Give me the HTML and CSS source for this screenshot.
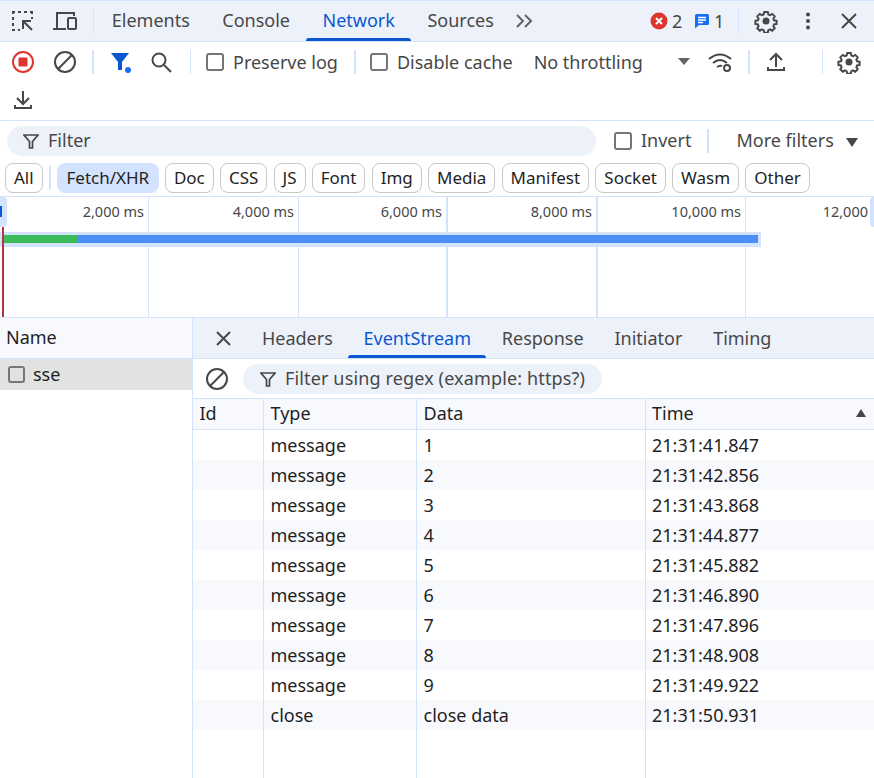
FILE: index.html
```html
<!DOCTYPE html>
<html lang="en">
  <head>
    <meta charset="UTF-8" />
    <title>DevTools Network</title>
    <link rel="stylesheet" href="styles.css">
  </head>
  <body>
    <!-- top tabs -->
    <div class="main-tabs">
      <svg class="icon first-icon" width="24" height="24" viewBox="0 0 24 24" fill="none" stroke="#474747" stroke-width="2"><path d="M2 5V3h2M7 3h3M13 3h3M19 3h2v2M21 8v2M2 8v3M2 14v3M2 20v1h2M7 21h2"/><path d="M21 21l-8-8M12 20v-8h8" stroke-width="2"/></svg>
      <svg class="icon" width="26" height="24" viewBox="0 0 26 24" fill="none" stroke="#474747" stroke-width="2"><path d="M5 20V4h17v3M1 20h13"/><rect x="16" y="9" width="8" height="11" rx="1"/></svg>
      <span class="sep"></span>
      <span class="main-tab">Elements</span>
      <span class="main-tab">Console</span>
      <span class="main-tab active">Network</span>
      <span class="main-tab">Sources</span>
      <svg class="more-tabs" width="20" height="16" viewBox="0 0 20 16" fill="none" stroke="#5f6368" stroke-width="2"><path d="M2 2l6 6-6 6M10 2l6 6-6 6"/></svg>
      <div class="main-right">
        <svg width="18" height="18" viewBox="0 0 18 18"><circle cx="9" cy="9" r="8.5" fill="#dc362e"/><path d="M6 6l6 6M12 6l-6 6" stroke="#fff" stroke-width="2"/></svg>
        <span class="count">2</span>
        <svg class="msg-icon" width="16" height="16" viewBox="0 0 16 16"><path d="M1 2.500Q1 1 2.500 1h11Q15 1 15 2.500v8.500Q15 12 13.500 12H5l-4 3.500z" fill="#1a6ef5"/><path d="M4 4.500h8M4 7h8M4 9.500h5" stroke="#fff" stroke-width="1.300"/></svg>
        <span class="count">1</span>
        <span class="sep sep-right"></span>
        <svg class="gear" width="24" height="24" viewBox="0 0 24 24"><use href="#gear-path"/></svg>
        <svg class="dots" width="24" height="24" viewBox="0 0 24 24" fill="#474747"><circle cx="12" cy="5.500" r="2"/><circle cx="12" cy="12" r="2"/><circle cx="12" cy="18.500" r="2"/></svg>
        <svg class="close" width="24" height="24" viewBox="0 0 24 24" fill="none" stroke="#474747" stroke-width="2"><path d="M5 5l14 14M19 5L5 19"/></svg>
      </div>
    </div>

    <!-- network toolbar -->
    <div class="toolbar">
      <div class="toolbar-row">
        <svg class="tool rec" width="24" height="24" viewBox="0 0 24 24"><circle cx="12" cy="12" r="10" fill="none" stroke="#dc362e" stroke-width="2"/><rect x="7.500" y="7.500" width="9" height="9" rx="1" fill="#dc362e"/></svg>
        <svg class="tool clear" width="24" height="24" viewBox="0 0 24 24" fill="none" stroke="#474747" stroke-width="2"><circle cx="12" cy="12" r="10"/><path d="M5 19L19 5"/></svg>
        <span class="sep"></span>
        <svg class="tool funnel" width="24" height="24" viewBox="0 0 24 24"><path d="M2 3h18l-7 9v8h-4v-8z" fill="#0b57d0"/><circle cx="19" cy="20" r="3" fill="#1a6ef5"/></svg>
        <svg class="tool search" width="24" height="24" viewBox="0 0 24 24" fill="none" stroke="#474747" stroke-width="2"><circle cx="10" cy="10" r="6.500"/><path d="M15 15l7 7"/></svg>
        <span class="sep sep-a"></span>
        <span class="check"></span><span class="tool-label">Preserve log</span>
        <span class="sep sep-b"></span>
        <span class="check"></span><span class="tool-label">Disable cache</span>
        <span class="tool-label throttle">No throttling</span>
        <span class="caret"></span>
        <svg class="tool wifi" width="26" height="24" viewBox="0 0 26 24" fill="none" stroke="#474747" stroke-width="2"><path d="M1 9q11-9 22 0M5 13q7-6 14 0M9 17q3-2 5-1"/><circle cx="19" cy="18" r="3"/></svg>
        <span class="sep sep-c"></span>
        <svg class="tool upload" width="24" height="24" viewBox="0 0 24 24" fill="none" stroke="#474747" stroke-width="2"><path d="M12 17V4M6 10l6-6 6 6M4 17v3h16v-3"/></svg>
        <span class="sep sep-d"></span>
        <svg class="gear" width="24" height="24" viewBox="0 0 24 24"><use href="#gear-path"/></svg>
      </div>
      <div class="toolbar-row second">
        <svg width="24" height="24" viewBox="0 0 24 24" fill="none" stroke="#474747" stroke-width="2"><path d="M12 3v13M6 10l6 6 6-6M4 17v3h16v-3"/></svg>
      </div>
    </div>

    <!-- filter bars -->
    <div class="filter-bar">
      <div class="filter-row">
        <div class="filter-pill">
          <svg width="16" height="16" viewBox="0 0 16 16" fill="none" stroke="#474747" stroke-width="1.700"><path d="M1 2h14l-5.500 6.500V15h-3V8.500z"/></svg>
          <span class="raised">Filter</span>
        </div>
        <span class="check"></span><span class="tool-label raised">Invert</span>
        <span class="sep sep-e"></span>
        <span class="tool-label more raised">More filters</span>
        <span class="caret dark"></span>
      </div>
      <div class="chips">
        <span class="chip">All</span>
        <span class="sep sep-chip"></span>
        <span class="chip on">Fetch/XHR</span>
        <span class="chip">Doc</span>
        <span class="chip">CSS</span>
        <span class="chip">JS</span>
        <span class="chip">Font</span>
        <span class="chip">Img</span>
        <span class="chip">Media</span>
        <span class="chip">Manifest</span>
        <span class="chip">Socket</span>
        <span class="chip">Wasm</span>
        <span class="chip">Other</span>
      </div>
    </div>

    <!-- overview -->
    <div class="overview">
      <div class="ov-cell w1">2,000 ms</div>
      <div class="ov-cell w2">4,000 ms</div>
      <div class="ov-cell w3">6,000 ms</div>
      <div class="ov-cell w4">8,000 ms</div>
      <div class="ov-cell w5">10,000 ms</div>
      <div class="ov-cell last">12,000</div>
      <span class="ov-grip left"></span>
      <span class="ov-grip right"></span>
      <div class="ov-track"><div class="ov-green"></div><div class="ov-blue"></div></div>
      <span class="ov-marker"></span>
    </div>

    <!-- requests + details -->
    <div class="split">
      <div class="names">
        <div class="names-head">Name</div>
        <div class="names-row"><span class="check small"></span><span class="raised">sse</span></div>
      </div>
      <div class="details">
        <div class="detail-tabs">
          <svg class="detail-close" width="20" height="20" viewBox="0 0 20 20" fill="none" stroke="#474747" stroke-width="2"><path d="M4 4l13 13M17 4L4 17"/></svg>
          <span class="detail-tab">Headers</span>
          <span class="detail-tab active">EventStream</span>
          <span class="detail-tab">Response</span>
          <span class="detail-tab">Initiator</span>
          <span class="detail-tab">Timing</span>
        </div>
        <div class="regex-row">
          <svg width="24" height="24" viewBox="0 0 24 24" fill="none" stroke="#474747" stroke-width="2"><circle cx="12" cy="12" r="10"/><path d="M5 19L19 5"/></svg>
          <div class="regex-pill">
            <svg width="16" height="16" viewBox="0 0 16 16" fill="none" stroke="#474747" stroke-width="1.700"><path d="M1 2h14l-5.500 6.500V15h-3V8.500z"/></svg>
            <span class="raised regex-text">Filter using regex (example: https?)</span>
          </div>
        </div>
        <div class="grid">
          <div class="grid-row head">
            <div>Id</div><div>Type</div><div>Data</div><div class="time-head">Time<span class="sort"></span></div>
          </div>
          <div class="grid-row"><div></div><div>message</div><div>1</div><div>21:31:41.847</div></div>
          <div class="grid-row"><div></div><div>message</div><div>2</div><div>21:31:42.856</div></div>
          <div class="grid-row"><div></div><div>message</div><div>3</div><div>21:31:43.868</div></div>
          <div class="grid-row"><div></div><div>message</div><div>4</div><div>21:31:44.877</div></div>
          <div class="grid-row"><div></div><div>message</div><div>5</div><div>21:31:45.882</div></div>
          <div class="grid-row"><div></div><div>message</div><div>6</div><div>21:31:46.890</div></div>
          <div class="grid-row"><div></div><div>message</div><div>7</div><div>21:31:47.896</div></div>
          <div class="grid-row"><div></div><div>message</div><div>8</div><div>21:31:48.908</div></div>
          <div class="grid-row"><div></div><div>message</div><div>9</div><div>21:31:49.922</div></div>
          <div class="grid-row"><div></div><div>close</div><div>close data</div><div>21:31:50.931</div></div>
          <div class="grid-row filler"><div></div><div></div><div></div><div></div></div>
        </div>
      </div>
    </div>

    <svg class="defs" width="0" height="0">
      <symbol id="gear-path" viewBox="0 0 24 24">
        <path d="M10 2h4l.6 2.800 1.900.8 2.400-1.500 2.800 2.800-1.500 2.400.8 1.900 2.800.6v3.400l-2.800.6-.8 1.900 1.500 2.400-2.800 2.800-2.400-1.500-1.900.8-.6 2.800h-4l-.6-2.800-1.900-.8-2.400 1.500-2.800-2.800 1.500-2.400-.8-1.900-2.800-.6v-3.400l2.800-.6.8-1.900-1.500-2.400 2.800-2.800 2.400 1.500 1.900-.8z" transform="translate(1.200 1.200) scale(.9)" fill="none" stroke="#474747" stroke-width="2.200"/>
        <circle cx="12" cy="12" r="3.500" fill="#474747"/>
      </symbol>
    </svg>
  </body>
</html>
```

FILE: styles.css
```css
* {
  box-sizing: border-box;
}

html,
body {
  margin: 0;
  padding: 0;
  height: 100%;
  overflow: hidden;
}

body {
  font-family: "Noto Sans", "Open Sans", sans-serif;
  font-size: 18px;
  color: #1f1f1f;
  background: #fff;
  display: flex;
  flex-direction: column;
}

svg {
  flex: none;
  display: block;
}

.defs {
  position: absolute;
}

.sep {
  flex: none;
  width: 2px;
  height: 24px;
  background: #d3e3fd;
}

.raised {
  padding-bottom: 2px;
}

/* top tabs */
.main-tabs {
  flex: none;
  height: 42px;
  display: flex;
  align-items: center;
  background: #edf2fa;
  border-top: 1px solid #d3e3fd;
  border-bottom: 1px solid #d3e3fd;
  color: #474747;
  padding-left: 11px;
}

.first-icon {
  margin-right: 17px;
}

.main-tabs .sep {
  width: 1px;
  height: 24px;
  margin-left: 15px;
}

.main-tab {
  height: 40px;
  line-height: 38px;
  padding: 0 16.25px;
  white-space: nowrap;
}

.main-tabs .sep + .main-tab {
  margin-left: 2px;
  padding-left: 15.75px;
}

.main-tab.active {
  color: #0b57d0;
  position: relative;
}

.main-tab.active::after {
  content: "";
  position: absolute;
  left: 0;
  right: 0;
  bottom: 0;
  height: 3px;
  background: #0b57d0;
  border-radius: 3px 3px 0 0;
}

.more-tabs {
  margin-left: 5px;
}

.main-right {
  margin-left: auto;
  display: flex;
  align-items: center;
  padding-right: 13px;
}

.count {
  margin-left: 4px;
  width: 12px;
}

.msg-icon {
  margin-left: 10px;
}

.main-tabs .sep-right {
  margin-left: 12px;
  margin-right: 15px;
}

.dots {
  margin-left: 18px;
}

.close {
  margin-left: 17px;
}

/* network toolbar */
.toolbar {
  flex: none;
  height: 79px;
  border-bottom: 1px solid #d3e3fd;
  color: #474747;
}

.toolbar-row {
  height: 39px;
  display: flex;
  align-items: center;
  padding-left: 11px;
}

.toolbar-row.second {
  height: 38px;
}

.clear {
  margin-left: 18px;
}

.toolbar-row .sep {
  margin-left: 15px;
}

.funnel {
  margin-left: 15px;
}

.search {
  margin-left: 16px;
}

.toolbar-row .sep-a {
  width: 1px;
  margin-left: 17px;
  margin-right: 15px;
}

.toolbar-row .sep-b {
  margin-left: 16px;
  margin-right: 14px;
}

.check {
  flex: none;
  width: 18px;
  height: 18px;
  border: 2px solid #747775;
  border-radius: 3px;
}

.tool-label {
  margin-left: 9px;
  white-space: nowrap;
}

.throttle {
  margin-left: 21px;
}

.caret {
  flex: none;
  width: 0;
  height: 0;
  margin-left: 35px;
  border-left: 6px solid transparent;
  border-right: 6px solid transparent;
  border-top: 7px solid #5f6368;
}

.wifi {
  margin-left: 18px;
}

.toolbar-row .sep-c {
  margin-left: 14px;
}

.upload {
  margin-left: 14px;
}

.toolbar-row .sep-d {
  width: 1px;
  margin-left: 34px;
}

.toolbar-row .gear {
  margin-left: 14px;
}

/* filter bars */
.filter-bar {
  flex: none;
  height: 76px;
  border-bottom: 1px solid #d3e3fd;
}

.filter-row {
  height: 40px;
  display: flex;
  align-items: center;
  padding-left: 7px;
  color: #474747;
  line-height: 24px;
}

.filter-pill {
  width: 589px;
  height: 30px;
  margin-right: 18px;
  padding-left: 16px;
  display: flex;
  align-items: center;
  gap: 9px;
  border-radius: 15px;
  background: #edf2fa;
}

.sep-e {
  margin-left: 16px;
}

.more {
  margin-left: 27px;
}

.caret.dark {
  margin-left: 12px;
  margin-top: 3px;
  border-top: 9px solid #474747;
}

.chips {
  display: flex;
  align-items: center;
  gap: 6.2px;
  padding-left: 5px;
  margin-top: 2px;
  font-size: 17px;
}

.chip {
  height: 30px;
  line-height: 27px;
  padding: 0 8px;
  border: 1px solid #c7c7c7;
  border-radius: 8px;
  white-space: nowrap;
}

.chip.on {
  padding: 0 8.5px;
  background: #d3e3fd;
  border-color: #d3e3fd;
}

/* overview */
.overview {
  flex: none;
  height: 121px;
  position: relative;
  display: flex;
  border-bottom: 1px solid #d3e3fd;
  font-size: 14.5px;
  color: #474747;
}

.ov-cell {
  flex: none;
  height: 100%;
  padding: 3px 4px 0 0;
  text-align: right;
  line-height: 22px;
  border-right: 1px solid #d3e3fd;
  white-space: nowrap;
}

.w1 {
  width: 149px;
}

.w2 {
  width: 150px;
}

.w3 {
  width: 149px;
  border-right-width: 2px;
}

.w4 {
  width: 150px;
  border-right-width: 2px;
}

.w5 {
  width: 148px;
}

.last {
  flex: 1;
  border-right: 0;
  padding-right: 6px;
}

.ov-grip {
  position: absolute;
  top: 0;
  height: 30px;
  background: #d3e3fd;
}

.ov-grip.left {
  left: 0;
  width: 7px;
  border-radius: 0 4px 4px 0;
}

.ov-grip.left::before {
  content: "";
  position: absolute;
  left: 0;
  top: 9px;
  width: 2px;
  height: 11px;
  background: #0b57d0;
}

.ov-grip.right {
  right: 0;
  width: 4px;
  border-radius: 4px 0 0 4px;
}

.ov-track {
  position: absolute;
  left: 0;
  top: 35px;
  width: 761px;
  height: 15px;
  padding: 3px 3px 4px 3px;
  display: flex;
  background: #d3e3fd;
}

.ov-green {
  width: 75px;
  background: #3bbb5a;
}

.ov-blue {
  flex: 1;
  background: #4c8df6;
}

.ov-marker {
  position: absolute;
  left: 2px;
  top: 30px;
  bottom: 0;
  width: 1.5px;
  background: #b3383f;
}

/* requests + details */
.split {
  flex: 1;
  display: flex;
  min-height: 0;
}

.names {
  flex: none;
  width: 193px;
  border-right: 1px solid #d3e3fd;
}

.names-head {
  height: 41px;
  line-height: 38px;
  padding-left: 6px;
  background: #f8f9fd;
  border-bottom: 1px solid #d3e3fd;
}

.names-row {
  height: 31px;
  display: flex;
  align-items: center;
  gap: 8px;
  padding-left: 8px;
  line-height: 28px;
  background: #e1e3e1;
}

.check.small {
  width: 17px;
  height: 17px;
}

.details {
  flex: 1;
  display: flex;
  flex-direction: column;
  min-width: 0;
}

.detail-tabs {
  flex: none;
  height: 41px;
  display: flex;
  align-items: center;
  background: #edf2fa;
  border-bottom: 1px solid #d3e3fd;
  color: #474747;
  padding-left: 20px;
}

.detail-close {
  margin-right: 13.5px;
}

.detail-tab {
  height: 40px;
  line-height: 40px;
  padding: 0 15.4px;
  white-space: nowrap;
}

.detail-tab.active {
  color: #0b57d0;
  position: relative;
}

.detail-tab.active::after {
  content: "";
  position: absolute;
  left: 0;
  right: 0;
  bottom: 0;
  height: 3px;
  background: #0b57d0;
  border-radius: 3px 3px 0 0;
}

.regex-row {
  flex: none;
  height: 39px;
  display: flex;
  align-items: center;
  padding-left: 12px;
  color: #474747;
}

.regex-pill {
  height: 30px;
  margin-left: 14px;
  padding: 0 17px;
  display: flex;
  align-items: center;
  gap: 9px;
  border-radius: 15px;
  background: #edf2fa;
  white-space: nowrap;
}

.regex-text {
  letter-spacing: 0.14px;
}

.grid {
  flex: 1;
  display: flex;
  flex-direction: column;
  min-height: 0;
  border-top: 1px solid #d3e3fd;
}

.grid-row {
  flex: none;
  height: 30px;
  display: grid;
  grid-template-columns: 71px 153px 229px 1fr;
  line-height: 30px;
  white-space: nowrap;
}

.grid-row > div {
  padding-left: 6.5px;
  border-right: 1px solid #d3e3fd;
}

.grid-row > div:last-child {
  padding-left: 6px;
  border-right: 0;
}

.grid-row:nth-child(odd) {
  background: #f8f9fd;
}

.grid-row.head {
  height: 31px;
  line-height: 28px;
  background: #f8f9fd;
  border-bottom: 1px solid #d3e3fd;
}

.grid-row.filler {
  flex: 1;
  background: #fff;
}

.time-head {
  position: relative;
}

.sort {
  position: absolute;
  right: 8px;
  top: 10px;
  width: 0;
  height: 0;
  border-left: 5.5px solid transparent;
  border-right: 5.5px solid transparent;
  border-bottom: 8px solid #474747;
}
```
